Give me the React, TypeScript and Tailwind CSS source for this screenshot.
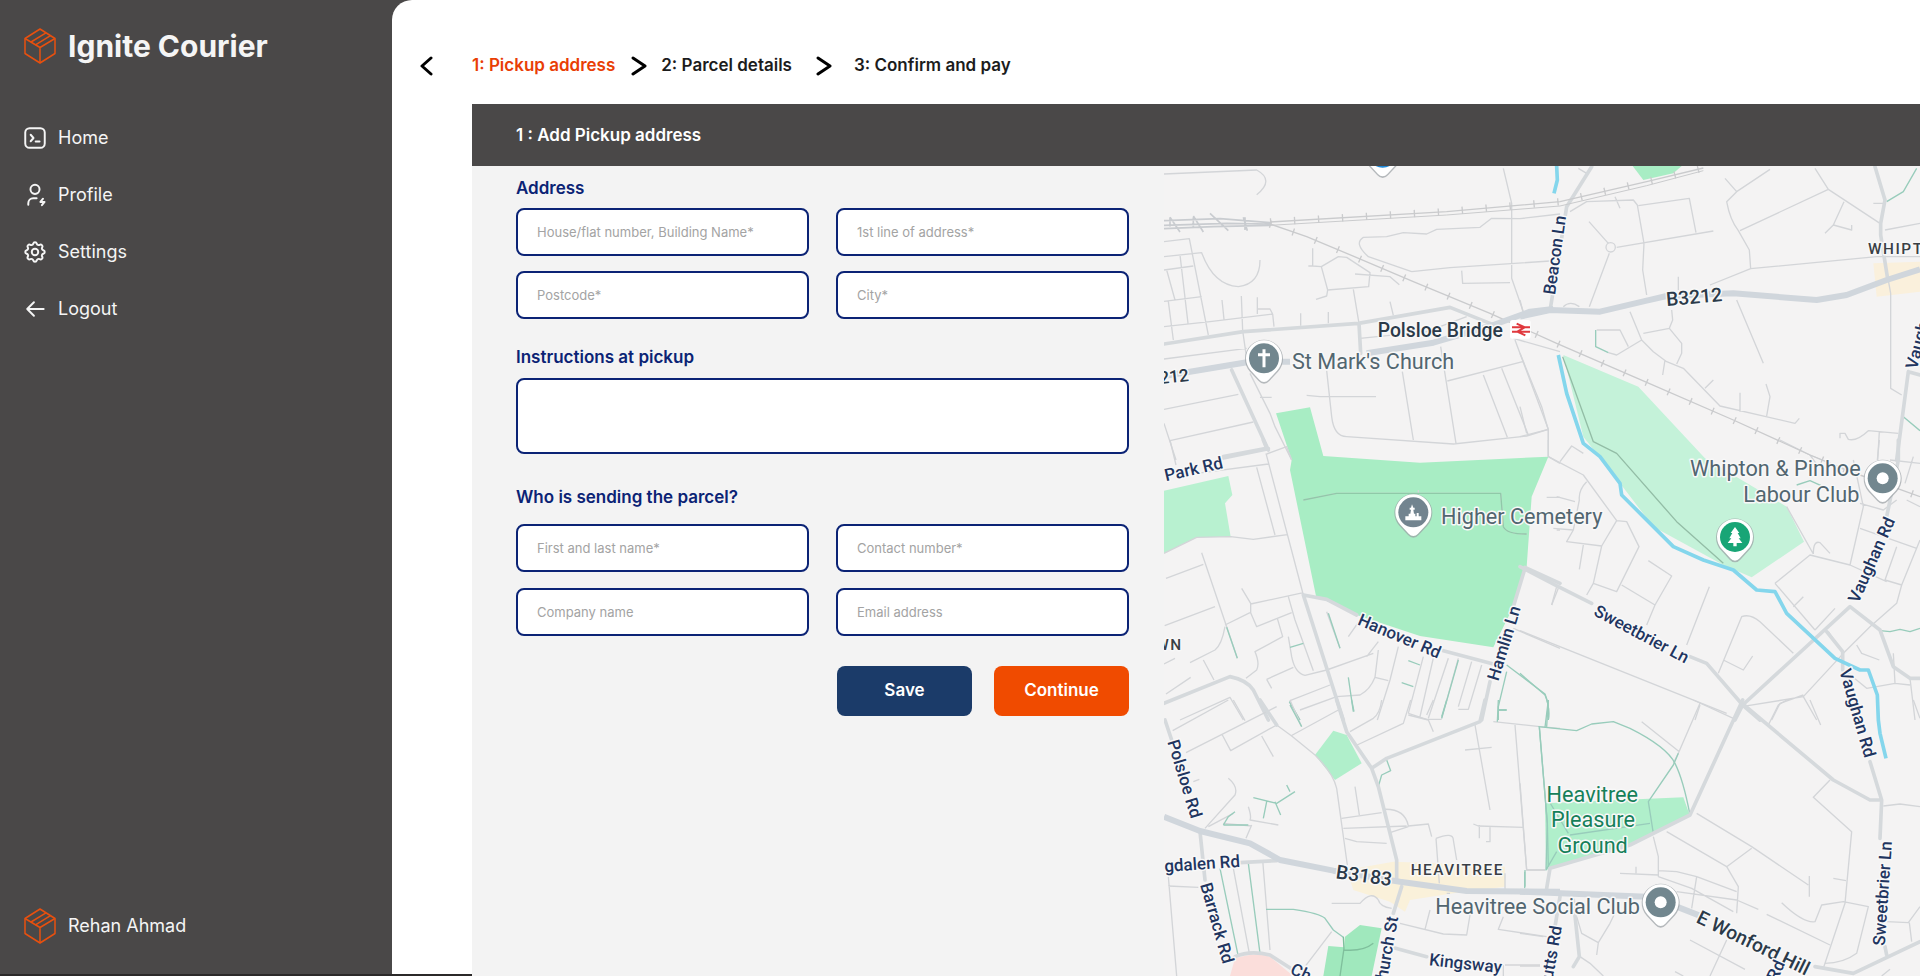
import React from "react";

const NAVY = "#1f3560";

type Label = { t: string; x: number; y: number; a?: number; s?: number; kind?: "road" | "place" | "route" | "area" | "park"; end?: boolean; mid?: boolean };

type Tile = {
  x: number;
  y: number;
  minor: string;
  medium: string;
  major: string;
  trail: string;
};

const TILES: Tile[] = [
  {
    x: 0,
    y: 0,
    minor:
      "M12 42L290 30Q345 60 290 104M12 245L88 236L145 525M12 290L125 278Q160 375 235 380Q300 372 300 300M60 285L84 490M12 330L100 318M20 330L45 420M12 424L125 410M25 424L40 540M12 500L150 485L338 462L342 500M338 462L330 447H292V412M292 447V462M186 420L192 478M244 408L248 512L262 610M422 460V497M505 456V490M458 265V318H445M458 318L484 320L535 290L560 292L630 338L626 380L503 390L484 320M503 390L500 408L468 418M585 342L690 350L718 374M580 388L597 490M690 425L700 466M755 335L625 290Q580 250 610 232L680 230L730 218L800 222L830 208L960 202L995 175L1080 176L1200 162M755 335L870 323L1170 303M905 332L908 370L1050 368M1030 25L1055 130V355L1090 455M600 535L800 515L920 470M12 597L260 565M12 748L235 703M30 842L280 786M12 790L48 900M270 640L330 760L345 800L395 900M300 712H335M440 706L480 710H648M500 632L515 770Q522 830 560 830L880 852L1100 828L1165 808M727 635L760 840M842 560L888 850M862 663L1088 605M970 645L1042 832M1025 625L1105 825M1065 540L1165 808V890M1060 535L1200 575",
    medium: "M12 552L250 515L595 490L870 442L990 490M597 490L602 580M215 630L325 870M190 894L325 866",
    major: "M12 648L90 635L270 605L390 605M620 580L820 548L1000 495L1110 455L1180 447",
    trail: "",
  },
  {
    x: 1080,
    y: 0,
    minor:
      "M150 155L200 125L340 120L352 135L372 250L368 330L380 405M355 137L508 115L528 218M290 262L580 213M207 185L265 250M268 280L208 440M258 262a14 14 0 1 0 28 0a14 14 0 1 0-28 0M175 25L200 40M285 110L300 145M615 55L650 95L750 28M650 95L620 125Q630 180 655 212L688 270L692 326L570 375M660 212L925 88L885 25M925 88L1080 190M972 125L940 195L915 220M940 195L995 210V195M692 326L1070 290H1200M1095 210L1200 190M1060 130H1095M475 350V390M455 450L458 480L448 505L370 520M330 455L365 540L400 575L440 605L490 625L600 738L825 790L838 775M448 505L485 550V580L470 612M435 600L428 645M555 685L580 660M660 698V755M738 672L750 710L740 768M230 510H300L325 560M265 578L290 585L365 540M650 420L730 610M1103 350L1112 400V685L1145 705M960 835V820H975L985 838Q1010 845 1045 812L1135 820M1078 815L1073 900M130 440Q150 420 178 440M0 420L10 460M0 580L65 740L85 810V890M0 830L85 808M0 740L20 820",
    medium: "M215 20L140 140L92 440M1065 20L1095 120L1082 190V225L1102 350M1165 635L1130 900M1165 635L1200 645",
    major: "M0 470L90 450L240 455L380 422L440 408L640 400L890 420L980 405L1100 360L1200 328",
    trail: "M1100 125L1150 95L1190 25M227 510V560L265 578M1150 770L1200 812",
  },
  {
    x: 0,
    y: 840,
    minor:
      "M30 0L48 75M110 100L325 72M290 82L345 285M318 40L430 465M320 42L380 20L395 60M12 340L110 292L212 290L280 298L382 284M125 338L200 560L232 655M18 415L130 373M14 557L165 500M245 445L272 490V518L290 560L395 518M272 492L430 458M195 555L270 518M12 672L45 655M195 560Q185 615 165 630L90 668M130 660L162 720M18 762L92 712M258 715L290 690Q300 670 285 635L368 590L352 535M385 470L405 540L460 692M385 590L395 650Q405 700 435 706L500 690L640 640M320 718L335 745M320 718L400 682M390 782L510 735M388 785L420 840M420 810L530 770L600 765Q630 750 645 712L655 630M645 712L685 722M715 620L690 720L652 840M500 515L540 625M60 840L210 772L250 840M565 590L600 540M620 650L655 605M790 650L745 820M822 645L780 830M865 655L805 835M895 655L845 835M935 665L895 800M965 675L925 808H895M745 820L800 838H845M430 180L530 160H1022L1030 260Q1040 282 1100 282M775 160V150M1165 50L1200 70M1060 565L1200 625M1190 440L1175 495M1165 0V50M1160 172H1200M1190 270H1200",
    medium: "M190 50L320 25L310 0M430 465L550 840M430 465L500 478L590 525M850 632L1000 672M12 790L210 710Q260 720 280 750L325 840M1095 385L1060 500M990 725L965 840M1095 382L1200 430",
    major: "",
    trail: "M505 520L540 625M565 712L580 815M388 785L420 840M895 660L845 835M1040 675L1155 762Q1170 800 1165 840M1040 695L1015 800V840M390 622L430 610M745 662L780 675M725 728L760 740M1015 810H1040M200 562L232 655",
  },
  {
    x: 1080,
    y: 840,
    minor:
      "M120 65L155 18L190 40M85 50L190 105L290 242L245 318L140 305L160 270L100 265M200 125Q175 150 178 180L160 270M110 170L165 185M290 242L320 245L357 320L290 455L220 430L245 318M190 315L178 388M115 445L95 495M200 465L220 430M305 435L405 495L380 555M405 495L455 408L385 362M568 440L500 615M595 700L665 530Q690 520 720 545L820 640M610 660L670 690L698 648M0 572L620 820M780 0L870 45L1000 100M1000 60L1030 200L990 375M870 45L895 80M800 200L880 342M880 342Q880 300 900 308L930 340M765 430L870 345L990 375L1100 425M765 430L885 570M820 500L850 470M1020 265L1190 325M1130 320L1095 420L1145 435L1200 300M1145 435L1130 490L1050 560L970 640L850 770L665 800M885 570L945 505M970 640L925 575M1010 615L1025 640L1078 660M1120 640L1125 730L1040 745L985 700M850 770L890 840M540 795L525 840M780 790L850 765M780 790L755 840M1170 715L1185 840M1160 180L1200 200M1110 60L1200 70M1180 50L1155 130M1072 60L1078 0M1020 190L1090 210L1130 180M1125 730L1170 735",
    medium: "M0 380L115 440L215 490M510 650L560 670L668 795M668 795L990 500L1080 570L1120 680L1170 715H1200M1135 0V60L1100 230M668 795L645 840M668 795L720 840M920 575L968 635V690",
    major: "",
    trail: "M0 700L75 765Q90 800 85 840M1080 572L1110 575L1140 568L1170 575L1200 565M830 135L870 122L910 140",
  },
  {
    x: 0,
    y: 1620,
    minor:
      "M38 92L205 0M220 0L255 62M78 158L350 20M187 105L212 152L350 75M305 108L340 170M350 75L395 108L465 165Q520 220 530 265L562 495M392 108L535 30M425 80L390 0M570 95L640 55Q660 40 665 0M585 138L730 70L752 0M820 95L805 60L745 45M585 260L598 345M545 355L665 338M550 385L740 378M555 415L590 425L680 430M670 328Q735 325 745 378L805 372L815 410M690 398L745 380M828 415Q880 395 880 420L890 480M828 415L838 550M945 75L990 330M915 150L995 142M940 372L955 378L1090 382M958 375V415M990 380V425H978M1065 75L1100 510H1155M135 385L225 285Q235 260 205 235M145 380L220 340M265 320Q275 350 270 360L355 375M275 375L258 415M190 370L275 378M25 530L50 828M25 558L115 562M220 505L268 760M308 480L330 750M515 610H600Q635 570 655 600Q660 620 695 625M100 245L118 238M75 265L88 275M720 670L850 702L920 705L930 645M810 630L795 688M1160 710L1015 688L1030 650M820 0L800 45M435 800L515 695M1035 795H1140M1030 795V828M1035 520V570M860 580H870M1000 65L1140 80L1200 85",
    medium: "M300 0L350 75M530 0L560 95L635 205L655 260L710 480V535M635 205L680 175L960 65L975 0M120 395L135 540M240 488L350 482M725 560L700 640M690 740L800 770M225 770Q270 750 330 765L400 810M15 60L35 120",
    major: "M12 350L120 393L270 430L360 480L520 512L720 545L920 573L1200 575",
    trail: "M390 15L425 80M575 0L582 35M655 260L665 225L692 212L680 180M280 293L350 310L405 275M380 255L390 275M345 305L362 345M320 305L310 355M180 505L235 770M265 490L300 760M318 628L400 628Q480 640 495 655L520 690L550 712M1015 0L1012 65M1015 30H1040M1165 0L1155 82M1138 82L1162 370L1165 500M1095 510V560M860 0L845 50M190 375L205 350L225 335M190 375L265 375",
  },
  {
    x: 1080,
    y: 1620,
    minor:
      "M0 250L20 510H75M540 10L475 160L460 190M365 65L478 155M520 0L640 55M745 75L775 15L800 0M870 0L902 75M1090 318L1140 312L1200 320M930 240L880 292L995 395L975 610L910 805M530 340L695 440L865 555M868 528V590M440 395L620 500L695 445M620 500L655 560L650 640M400 410L415 470V530M415 512L470 515L530 530L650 575M530 530L515 625M300 520L415 525M348 500V520M415 530L515 565L640 635M470 575L650 600L715 628M740 643L930 735M785 608Q850 670 885 665L905 615L970 605L1045 620L1010 760Q970 790 915 790M940 535L978 542M510 720L675 808M620 720L570 828M170 650L185 700L235 728L270 670L282 645M235 728L230 765M180 770L210 790L250 828M0 700L70 710M0 798H60M1100 665L1165 668L1200 620M1168 668L1175 725M465 815L490 828M1085 828L1110 808M1180 0L1200 55",
    medium: "M668 0L510 345L330 435L90 505L80 565M672 15L940 240L1050 300L1085 300M1050 185L1085 300L1080 415M1100 765L1095 740M160 600L178 770L160 800M885 800L1000 820L1200 725M120 590L105 680",
    major: "M0 575L380 590M470 620L560 655",
    trail: "M85 0L80 80M55 80L170 92L215 72L280 65L330 85Q440 140 465 190Q490 240 510 345M475 160L460 195L385 305L400 400M58 80L82 370L78 510L110 455M150 405L390 370M14 515V565M85 300L145 400",
  },
];

const LABELS: Label[] = [
  { t: "Polsloe Bridge", x: 653, y: 530, kind: "route" },
  { t: "St Mark's Church", x: 396, y: 628, kind: "place" },
  { t: "212", x: 0, y: 672, a: -6, s: 52, kind: "route" },
  { t: "Beacon Ln", x: 1185, y: 406, a: -82 },
  { t: "B3212", x: 1520, y: 438, a: -5, kind: "route" },
  { t: "WHIPTON", x: 2124, y: 283, kind: "area" },
  { t: "Vaughan Rd", x: 2270, y: 630, a: -75 },
  { t: "Park Rd", x: 18, y: 964, a: -13 },
  { t: "Higher Cemetery", x: 843, y: 1091, kind: "place" },
  { t: "Hanover Rd", x: 590, y: 1393, a: 23 },
  { t: "Hamlin Ln", x: 1015, y: 1565, a: -73 },
  { t: "WN", x: -14, y: 1470, kind: "area" },
  { t: "Whipton & Pinhoe", x: 2102, y: 948, kind: "place", end: true },
  { t: "Labour Club", x: 2098, y: 1025, kind: "place", end: true },
  { t: "Sweetbrier Ln", x: 1298, y: 1364, a: 28 },
  { t: "Vaughan Rd", x: 2095, y: 1332, a: -66 },
  { t: "Vaughan Rd", x: 2038, y: 1532, a: 74 },
  { t: "Polsloe Rd", x: 22, y: 1745, a: 73 },
  { t: "gdalen Rd", x: 14, y: 2136, a: -4 },
  { t: "B3183", x: 526, y: 2155, a: 8, kind: "route" },
  { t: "HEAVITREE", x: 752, y: 2145, kind: "area" },
  { t: "Barrack Rd", x: 120, y: 2174, a: 74 },
  { t: "Church St", x: 676, y: 2492, a: -80 },
  { t: "Kingsway", x: 806, y: 2416, a: 6 },
  { t: "Ch", x: 388, y: 2440, a: 25 },
  { t: "Butts Rd", x: 1172, y: 2492, a: -80 },
  { t: "Heavitree Social Club", x: 826, y: 2261, kind: "place" },
  { t: "E Wonford Hill", x: 1606, y: 2286, a: 26, kind: "route" },
  { t: "Rd", x: 1850, y: 2466, a: -65 },
  { t: "Sweetbrier Ln", x: 2174, y: 2358, a: -86 },
  { t: "Heavitree", x: 1297, y: 1925, kind: "park", mid: true },
  { t: "Pleasure", x: 1299, y: 2001, kind: "park", mid: true },
  { t: "Ground", x: 1298, y: 2078, kind: "park", mid: true },
];

const LABEL_STYLE = {
  road: { fill: NAVY, weight: 500, size: 51 },
  route: { fill: "#2b3a49", weight: 500, size: 58 },
  place: { fill: "#526670", weight: 400, size: 65 },
  park: { fill: "#16805a", weight: 400, size: 65 },
  area: { fill: "#3a3f45", weight: 500, size: 46 },
};

function MapLabel({ t, x, y, a = 0, s, kind = "road", end, mid }: Label) {
  const st = LABEL_STYLE[kind];
  return (
    <text
      transform={`translate(${x} ${y}) rotate(${a})`}
      fill={st.fill}
      fontWeight={st.weight}
      fontSize={s ?? st.size}
      textAnchor={end ? "end" : mid ? "middle" : "start"}
      stroke="#f8f8f8"
      strokeWidth={9}
      strokeLinejoin="round"
      paintOrder="stroke"
      className={kind === "area" ? "tracking-widest" : undefined}
    >
      {t}
    </text>
  );
}

function Pin({ x, y, color, children }: { x: number; y: number; color: string; children?: React.ReactNode }) {
  return (
    <g transform={`translate(${x} ${y})`}>
      <path d="M0 76Q-9 76-16 68L-42 40A57 57 0 1 1 42 40L16 68Q9 76 0 76Z" fill="#9aa0a4" opacity="0.7" />
      <path d="M0 71Q-8 71-14 64L-39 37A54 54 0 1 1 39 37L14 64Q8 71 0 71Z" fill="#fff" />
      <circle r="45" fill={color} />
      {children}
    </g>
  );
}

function Rail({ d }: { d: string }) {
  return (
    <g fill="none" stroke="#cacbcd">
      <path d={d} strokeWidth="4" />
      <path d={d} strokeWidth="22" strokeDasharray="4 68" />
    </g>
  );
}

function StreetMap() {
  return (
    <svg
      role="img"
      aria-label="Map"
      viewBox="12 18 2268 2430"
      preserveAspectRatio="xMinYMin slice"
      className="block min-w-0 flex-1 bg-[#f4f3f3] font-[Roboto,sans-serif]"
    >
      <g>
        <path d="M348 760L450 742L490 888L780 908L1165 890L1115 1010L1100 1220L1060 1340L1000 1462L780 1428L590 1365L468 1308L390 930L395 900Z" fill="#a8edc4" />
        <path d="M12 992L205 948L217 1005L195 1030L212 1130L110 1132L12 1180Z" fill="#b8f1d0" />
        <path d="M1210 585L1435 680L1635 895L1880 1040L1932 1145L1775 1252L1690 1215L1480 1100L1380 970L1270 830Z" fill="#c4f2d9" />
        <path d="M1418 18L1450 60L1540 40L1565 18Z" fill="#a8edc4" />
        <path d="M465 1785L520 1712L560 1725L605 1810L525 1860Z" fill="#b0efcb" />
        <path d="M555 2330L600 2295L665 2305L635 2448H490L505 2358L552 2362Z" fill="#a0e8bd" />
        <path d="M1155 1930L1570 1912L1590 1968L1420 2048L1240 2105L1158 2130Z" fill="#b0efcb" />
        <path d="M2140 310L2280 305V395L2150 410Z" fill="#faf0dc" />
        <path d="M560 2130L700 2105L830 2110L1035 2120V2180L880 2200L750 2220L735 2255L690 2225L580 2190Z" fill="#faf1da" />
        <path d="M210 2448L225 2395Q290 2375 330 2390L400 2448Z" fill="#fbdedb" />
      </g>

      <g fill="none" strokeLinejoin="round">
        {TILES.map((tile, i) => (
          <g key={i} transform={`translate(${tile.x} ${tile.y})`}>
            <path d={tile.minor} stroke="#d3d5d8" strokeWidth="4" />
            <path d={tile.trail} stroke="#98ccbb" strokeWidth="4" />
            <path d={tile.medium} stroke="#d5d9dc" strokeWidth="11" strokeLinecap="round" />
          </g>
        ))}
        <path d="M430 1020L530 1000H1022L1030 1100Q1040 1122 1100 1122" stroke="#8fc9a8" strokeWidth="4" />
        <path d="M1208 590L1300 845L1370 880L1550 1085L1690 1210" stroke="#93bda6" strokeWidth="4" />
        <path d="M550 2330L552 2370Q610 2375 640 2350M552 2365L540 2448" stroke="#7fbf9c" strokeWidth="4" />
        <path
          d="M12 182L180 176L330 188M12 196L200 190L330 192M12 206L160 200L330 196M30 172L60 216M100 168L130 216M150 160L205 212M250 172L262 212M30 172V200M100 172V200M255 172V210"
          stroke="#c9ccd0"
          strokeWidth="5"
        />
        <Rail d="M330 186L860 155L1200 125L1460 65L1630 24" />
        <path d="M330 196L860 165L1200 138L1460 77L1630 32" stroke="#cacbcd" strokeWidth="3" />
        <Rail d="M330 192L440 230L560 280L760 365L990 460L1190 550L1455 665L1720 780L1950 885L2100 945L2280 1010" />
        <path d="M1190 18L1192 60L1182 100M1195 585L1220 700L1270 850L1320 890L1380 970L1385 1005L1540 1160L1630 1200L1720 1230L1790 1290L1845 1295L1880 1360L2025 1495L2100 1530H2125L2152 1605L2155 1680L2160 1720L2178 1795" stroke="#84d6ec" strokeWidth="11" />
        {TILES.map((tile, i) => (
          <path key={i} transform={`translate(${tile.x} ${tile.y})`} d={tile.major} stroke="#d0d6dc" strokeWidth="18" />
        ))}
      </g>

      <rect x="1050" y="480" width="62" height="56" rx="8" fill="#fff" />
      <path d="M1056 502H1110M1056 515H1110M1070 491L1094 502L1072 515L1096 526" fill="none" stroke="#e0393e" strokeWidth="6" />

      {LABELS.map((l, i) => (
        <MapLabel key={i} {...l} />
      ))}

      <Pin x={668} y={-22} color="#1e88d8" />
      <Pin x={312} y={595} color="#72878f">
        <path d="M0-27V27M-18-11H18" stroke="#fff" strokeWidth="9" />
      </Pin>
      <Pin x={760} y={1057} color="#72848f">
        <path d="M-24 24V12H-14V4H-9L-7-8H-11V-14H-7L-4-24L0-14H4V-8H0L2 4H6V12H10V2H16V12H24V24Z" fill="#fff" />
      </Pin>
      <Pin x={2168} y={955} color="#72878f">
        <circle r="18" fill="#fff" />
      </Pin>
      <Pin x={1725} y={1131} color="#18a576">
        <path d="M0-30L13-12H8L17 4H11L22 18H5V28H-5V18H-22L-11 4H-17L-8-12H-13Z" fill="#fff" />
      </Pin>
      <Pin x={1502} y={2227} color="#72878f">
        <circle r="18" fill="#fff" />
      </Pin>
    </svg>
  );
}

function BoxLogo() {
  return (
    <svg viewBox="0 0 32 36" className="h-9 w-8 shrink-0" fill="none" stroke="#e8500f" strokeWidth="1.5" strokeLinejoin="round" aria-hidden="true">
      <path d="M16 1L31 10.5V25.500L16 35L1 25.500V10.5Z" />
      <path d="M1 10.5L16 19.500L31 10.5M16 19.500V35" />
      <path d="M7 14L22 4.800M11.500 16.800L26.500 7.600" />
    </svg>
  );
}

function NavIcon({ children }: { children: React.ReactNode }) {
  return (
    <svg viewBox="0 0 24 24" className="size-[26px] shrink-0" fill="none" stroke="currentColor" strokeWidth="1.8" strokeLinecap="round" strokeLinejoin="round" aria-hidden="true">
      {children}
    </svg>
  );
}

const NAV = [
  {
    label: "Home",
    icon: (
      <>
        <rect x="3" y="3" width="18" height="18" rx="4" />
        <path d="M8 9l2.6 3L8 15M12.6 15.2h3.6" />
      </>
    ),
  },
  {
    label: "Profile",
    icon: (
      <>
        <circle cx="12" cy="6.8" r="4.2" />
        <path d="M5.8 21v-1.5a4.5 4.5 0 0 1 4.5-4.5h3.2" />
        <path d="M19.4 15.4l-2.400 3h3.800l-2.400 3" />
      </>
    ),
  },
  {
    label: "Settings",
    icon: (
      <>
        <path d="M10.325 4.317c.426-1.756 2.924-1.756 3.35 0a1.724 1.724 0 0 0 2.573 1.066c1.543-.94 3.31.826 2.37 2.37a1.724 1.724 0 0 0 1.065 2.572c1.756.426 1.756 2.924 0 3.35a1.724 1.724 0 0 0-1.066 2.573c.94 1.543-.826 3.31-2.37 2.37a1.724 1.724 0 0 0-2.572 1.065c-.426 1.756-2.924 1.756-3.35 0a1.724 1.724 0 0 0-2.573-1.066c-1.543.94-3.31-.826-2.37-2.37a1.724 1.724 0 0 0-1.065-2.572c-1.756-.426-1.756-2.924 0-3.35a1.724 1.724 0 0 0 1.066-2.573c-.94-1.543.826-3.31 2.37-2.37c1 .608 2.296.07 2.572-1.065z" />
        <circle cx="12" cy="12" r="3" />
      </>
    ),
  },
  { label: "Logout", icon: <path d="M20 12H4.800M11 5.800L4.800 12l6.200 6.200" /> },
];

function Sidebar() {
  return (
    <aside className="flex w-[392px] shrink-0 flex-col border-b-2 border-[#2b2929] text-[#f5f5f5]">
      <div className="flex items-center gap-3 px-6 pt-6">
        <BoxLogo />
        <span className="text-3xl leading-11 font-bold">Ignite Courier</span>
      </div>
      <nav className="mt-[50px] flex flex-col gap-[17px] px-[22px]">
        {NAV.map((item) => (
          <a key={item.label} href="#" className="flex h-10 items-center gap-[10px] text-lg">
            <NavIcon>{item.icon}</NavIcon>
            {item.label}
          </a>
        ))}
      </nav>
      <div className="mt-auto flex items-center gap-3 px-6 pb-[30px]">
        <BoxLogo />
        <span className="text-lg">Rehan Ahmad</span>
      </div>
    </aside>
  );
}

function StepArrow() {
  return (
    <svg viewBox="0 0 16 20" className="h-5 w-4 shrink-0" fill="none" stroke="#000" strokeWidth="3" strokeLinecap="round" strokeLinejoin="round" aria-hidden="true">
      <path d="M2 2l12 8L2 18" />
    </svg>
  );
}

function Field({ label, type = "text" }: { label: string; type?: string }) {
  return (
    <input
      type={type}
      aria-label={label}
      placeholder={label}
      className="h-12 w-full min-w-0 rounded-lg border-2 border-[#0b2375] bg-white px-[19px] text-[13px] text-gray-800 placeholder:text-[#a3a3a3]"
    />
  );
}

export default function App() {
  return (
    <div className="flex min-h-screen bg-[#4a4848] font-[Inter,sans-serif]">
      <Sidebar />
      <main className="flex min-w-0 flex-1 flex-col rounded-tl-[20px] bg-white">
        <header className="flex h-[104px] items-center pt-7 pl-7">
          <button type="button" aria-label="Back" className="flex w-13 shrink-0">
            <svg viewBox="0 0 14 20" className="h-5 w-[14px]" fill="none" stroke="#000" strokeWidth="3" strokeLinecap="round" strokeLinejoin="round" aria-hidden="true">
              <path d="M11 2L2 10l9 8" />
            </svg>
          </button>
          <ol className="flex items-center text-[17px] font-semibold whitespace-nowrap text-[#1c1c1c]">
            <li className="flex items-center gap-4 text-[#e93e05]">
              1: Pickup address
              <StepArrow />
            </li>
            <li className="ml-[14px] flex items-center gap-6">
              2: Parcel details
              <StepArrow />
            </li>
            <li className="ml-[22px]">3: Confirm and pay</li>
          </ol>
        </header>

        <div className="flex flex-1">
          <div className="w-20 shrink-0 border-b-2 border-[#2b2929]" />
          <section className="flex min-w-0 flex-1 flex-col bg-[#f3f3f3]">
            <h1 className="flex h-[62px] items-center bg-[#4a4848] px-11 pt-[2px] text-[17px] font-semibold text-white">1 : Add Pickup address</h1>
            <div className="flex flex-1">
              <form className="w-[692px] shrink-0 pt-[10px] pr-[35px] pl-11 text-[#0b2375]" onSubmit={(e) => e.preventDefault()}>
                <h2 className="text-[17px] leading-6 font-semibold">Address</h2>
                <div className="mt-2 grid grid-cols-2 gap-x-[27px] gap-y-[15px]">
                  <Field label="House/flat number, Building Name*" />
                  <Field label="1st line of address*" />
                  <Field label="Postcode*" />
                  <Field label="City*" />
                </div>

                <label htmlFor="instructions" className="mt-[26px] block text-[17px] leading-6 font-semibold">
                  Instructions at pickup
                </label>
                <textarea id="instructions" className="mt-[9px] block h-[76px] w-full resize-none rounded-lg border-2 border-[#0b2375] bg-white px-[19px] py-3 text-[13px] text-gray-800" />

                <h2 className="mt-[31px] text-[17px] leading-6 font-semibold">Who is sending the parcel?</h2>
                <div className="mt-[15px] grid grid-cols-2 gap-x-[27px] gap-y-4">
                  <Field label="First and last name*" />
                  <Field label="Contact number*" type="tel" />
                  <Field label="Company name" />
                  <Field label="Email address" type="email" />
                </div>

                <div className="mt-[30px] flex justify-end gap-[22px] text-[17px] font-semibold text-white">
                  <button type="button" className="h-[50px] w-[135px] rounded-lg bg-[#1b3b69]">
                    Save
                  </button>
                  <button type="submit" className="h-[50px] w-[135px] rounded-lg bg-[#f04b00]">
                    Continue
                  </button>
                </div>
              </form>
              <StreetMap />
            </div>
          </section>
        </div>
      </main>
    </div>
  );
}
